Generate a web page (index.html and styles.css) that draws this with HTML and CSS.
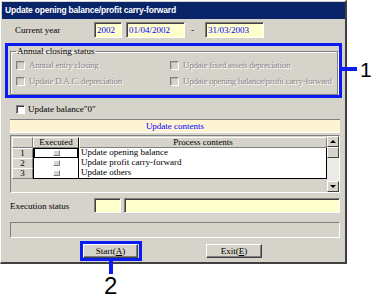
FILE: index.html
```html
<!DOCTYPE html>
<html lang="en">
<head>
    <meta charset="UTF-8">
    <title>Update opening balance/profit carry-forward</title>
    <link rel="stylesheet" href="styles.css">
</head>
<body>
    <div class="stage">
        <div class="window">
            <div class="titlebar">Update opening balance/profit carry-forward</div>
            <div class="content">

                <div class="year-row">
                    <span class="label">Current year</span>
                    <div class="field f-year">2002</div>
                    <div class="field f-date">01/04/2002</div>
                    <span class="dash">-</span>
                    <div class="field f-date">31/03/2003</div>
                </div>

                <!-- Annual closing status group -->
                <fieldset class="group">
                    <legend>Annual closing status</legend>
                    <div class="checks">
                        <div class="check disabled"><span class="box"></span>Annual entry closing</div>
                        <div class="check disabled"><span class="box"></span>Update fixed assets depreciation</div>
                        <div class="check disabled"><span class="box"></span>Update D.A.C. depreciation</div>
                        <div class="check disabled"><span class="box"></span>Update opening balance/profit carry-forward</div>
                    </div>
                </fieldset>

                <div class="check balance-row"><span class="box"></span>Update balance"0"</div>

                <div class="band">Update contents</div>

                <!-- Process list -->
                <div class="grid">
                    <div class="grid-main">
                        <div class="grid-row head">
                            <div class="rowhead"></div>
                            <div class="cell hcell hexec">Executed</div>
                            <div class="cell hcell">Process contents</div>
                        </div>
                        <div class="grid-body">
                            <div class="grid-row">
                                <div class="rowhead">1</div>
                                <div class="cell exec focus"><span class="mini"></span></div>
                                <div class="cell text">Update opening balance</div>
                            </div>
                            <div class="grid-row">
                                <div class="rowhead">2</div>
                                <div class="cell exec"><span class="mini"></span></div>
                                <div class="cell text">Update profit carry-forward</div>
                            </div>
                            <div class="grid-row">
                                <div class="rowhead">3</div>
                                <div class="cell exec"><span class="mini"></span></div>
                                <div class="cell text">Update others</div>
                            </div>
                        </div>
                    </div>
                    <div class="scrollbar">
                        <div class="sb-btn"><span class="arrow up"></span></div>
                        <div class="sb-thumb"></div>
                        <div class="sb-track"></div>
                        <div class="sb-btn"><span class="arrow down"></span></div>
                    </div>
                </div>

                <div class="exec-row">
                    <span class="label">Execution status</span>
                    <div class="field f-small"></div>
                    <div class="field f-long"></div>
                </div>

                <div class="status-bar"></div>

                <div class="buttons">
                    <button class="btn btn-start">Start(<u>A</u>)</button>
                    <button class="btn btn-exit">Exit(<u>E</u>)</button>
                </div>
            </div>
        </div>

        <!-- Callout marks -->
        <div class="mark-box mark-1"></div>
        <div class="mark-line line-1"></div>
        <div class="mark-num num-1">1</div>

        <div class="mark-box mark-2"></div>
        <div class="mark-line line-2"></div>
        <div class="mark-num num-2">2</div>
    </div>
</body>
</html>
```

FILE: styles.css
```css
body {
    margin: 0;
    background-color: white;
    font-family: "Liberation Serif", serif;
    font-size: 9px;
    color: black;
}
.stage {
    position: relative;
    width: 392px;
    height: 305px;
}
.window {
    width: 347px;
    height: 264px;
    box-sizing: border-box;
    background-color: #d6d3cb;
    border-style: solid;
    border-width: 1px 2px 2px 1px;
    border-color: #ffffff #404040 #404040 #ffffff;
}
.titlebar {
    margin: 1px 0 0 1px;
    height: 17px;
    padding-left: 3px;
    background-color: #0a246a;
    color: white;
    font: bold 8.5px "Liberation Sans", sans-serif;
    letter-spacing: -0.2px;
    line-height: 17px;
    white-space: nowrap;
}
.content {
    padding: 0 5px 0 9px;
}
.field {
    height: 16px;
    box-sizing: border-box;
    background-color: #ffffcc;
    color: #0000ff;
    border: 1px solid;
    border-color: #808080 #ffffff #ffffff #808080;
    box-shadow: inset 1px 1px #404040;
    padding-left: 2px;
    line-height: 14px;
}
.year-row {
    display: flex;
    align-items: center;
    margin-top: 3px;
    height: 16px;
}
.year-row .label {
    width: 84px;
    padding-left: 5px;
    box-sizing: border-box;
}
.f-year {
    width: 28px;
    margin-right: 4px;
}
.f-date {
    width: 59px;
}
.dash {
    width: 20px;
    padding-left: 6px;
    box-sizing: border-box;
}
.group {
    margin: 8px 2px 0 0;
    padding: 0 0 5px 5px;
    border: 1px solid #808080;
    box-shadow: inset 1px 1px #ffffff, 1px 1px #ffffff;
}
.group legend {
    padding: 0 1px;
    line-height: 11px;
}
.checks {
    display: grid;
    grid-template-columns: 154px 1fr;
    grid-auto-rows: 16px;
}
.check {
    display: flex;
    align-items: center;
    white-space: nowrap;
}
.box {
    flex: none;
    width: 9px;
    height: 9px;
    box-sizing: border-box;
    margin-right: 4px;
    background-color: white;
    border: 1px solid;
    border-color: #808080 #ffffff #ffffff #808080;
    box-shadow: inset 1px 1px #404040;
}
.check.disabled {
    color: #8a8a8a;
    text-shadow: 1px 1px #ffffff;
    letter-spacing: -0.3px;
}
.check.disabled .box {
    background-color: #d6d3cb;
    box-shadow: inset 1px 1px #b8b6b0;
}
.balance-row {
    margin-top: 8px;
    height: 12px;
    padding-left: 6px;
}
.balance-row .box {
    margin-right: 3px;
}
.band {
    margin-top: 4px;
    height: 14px;
    line-height: 13px;
    box-sizing: border-box;
    background-color: #fff3d6;
    border-top: 1px solid #808080;
    border-bottom: 1px solid #ffffff;
    color: #0000ff;
    text-align: center;
}
.grid {
    display: flex;
    margin-top: 2px;
    height: 58px;
    box-sizing: border-box;
    border: 1px solid;
    border-color: #808080 #ffffff #ffffff #808080;
}
.grid-main {
    flex: 1;
    padding: 1px 0 0 1px;
}
.grid-row {
    display: grid;
    grid-template-columns: 21px 46px 1fr;
    height: 10px;
}
.grid-row.head {
    height: 11px;
}
.rowhead {
    box-sizing: border-box;
    border: 1px solid;
    border-color: #ffffff #808080 #808080 #ffffff;
    text-align: center;
    line-height: 9px;
}
.cell {
    box-sizing: border-box;
    line-height: 9px;
}
.hcell {
    border: 1px solid;
    border-color: #ffffff #808080 #808080 #ffffff;
    text-align: center;
}
.hexec {
    border-right-color: #000000;
}
.grid-body .cell {
    background-color: white;
    border-bottom: 1px solid #c8c8c8;
}
.grid-body .grid-row:last-child .cell {
    border-bottom-color: #000000;
}
.grid-body .exec {
    border-left: 1px solid #000000;
    border-right: 1px solid #000000;
    display: flex;
    justify-content: center;
    align-items: center;
}
.grid-body .text {
    padding-left: 2px;
    border-right: 1px solid #000000;
}
.exec.focus {
    box-shadow: inset 0 0 0 1px #000000;
}
.mini {
    width: 7px;
    height: 6px;
    box-sizing: border-box;
    background-color: #d6d3cb;
    border: 1px solid;
    border-color: #ffffff #808080 #808080 #ffffff;
}
.scrollbar {
    width: 12px;
    display: flex;
    flex-direction: column;
}
.sb-btn, .sb-thumb {
    height: 11px;
    box-sizing: border-box;
    background-color: #d6d3cb;
    border: 1px solid;
    border-color: #ffffff #404040 #404040 #ffffff;
    display: flex;
    justify-content: center;
    align-items: center;
}
.sb-track {
    flex: 1;
    background-color: #ebeae6;
}
.arrow {
    width: 0;
    height: 0;
    border-left: 3px solid transparent;
    border-right: 3px solid transparent;
}
.arrow.up {
    border-bottom: 3px solid #000000;
}
.arrow.down {
    border-top: 3px solid #000000;
}
.exec-row {
    display: flex;
    align-items: center;
    margin-top: 5px;
    height: 15px;
}
.exec-row .label {
    width: 84px;
}
.exec-row .field {
    height: 15px;
}
.f-small {
    width: 27px;
    margin-right: 3px;
}
.f-long {
    flex: 1;
}
.status-bar {
    margin-top: 9px;
    height: 16px;
    box-sizing: border-box;
    border: 1px solid;
    border-color: #808080 #ffffff #ffffff #808080;
}
.buttons {
    display: flex;
    margin-top: 6px;
}
.btn {
    height: 14px;
    padding: 0;
    box-sizing: border-box;
    background-color: #d6d3cb;
    border: 1px solid;
    border-color: #ffffff #404040 #404040 #ffffff;
    box-shadow: inset -1px -1px #808080;
    font-family: "Liberation Serif", serif;
    font-size: 9px;
    line-height: 11px;
    color: black;
}
.btn-start {
    width: 55px;
    margin-left: 73px;
}
.btn-exit {
    width: 56px;
    margin-left: 68px;
}
.mark-box {
    position: absolute;
    box-sizing: border-box;
    border: 3px solid #0a1cf2;
}
.mark-1 {
    left: 5px;
    top: 43px;
    width: 337px;
    height: 55px;
}
.mark-2 {
    left: 80px;
    top: 241px;
    width: 62px;
    height: 20px;
}
.mark-line {
    position: absolute;
    background-color: #0a1cf2;
}
.line-1 {
    left: 342px;
    top: 67px;
    width: 15px;
    height: 4px;
}
.line-2 {
    left: 109px;
    top: 261px;
    width: 4px;
    height: 13px;
}
.mark-num {
    position: absolute;
    font-family: "Liberation Sans", sans-serif;
    color: black;
    line-height: 1;
}
.num-1 {
    left: 360px;
    top: 59px;
    font-size: 21px;
}
.num-2 {
    left: 104px;
    top: 274px;
    font-size: 24px;
}
```
